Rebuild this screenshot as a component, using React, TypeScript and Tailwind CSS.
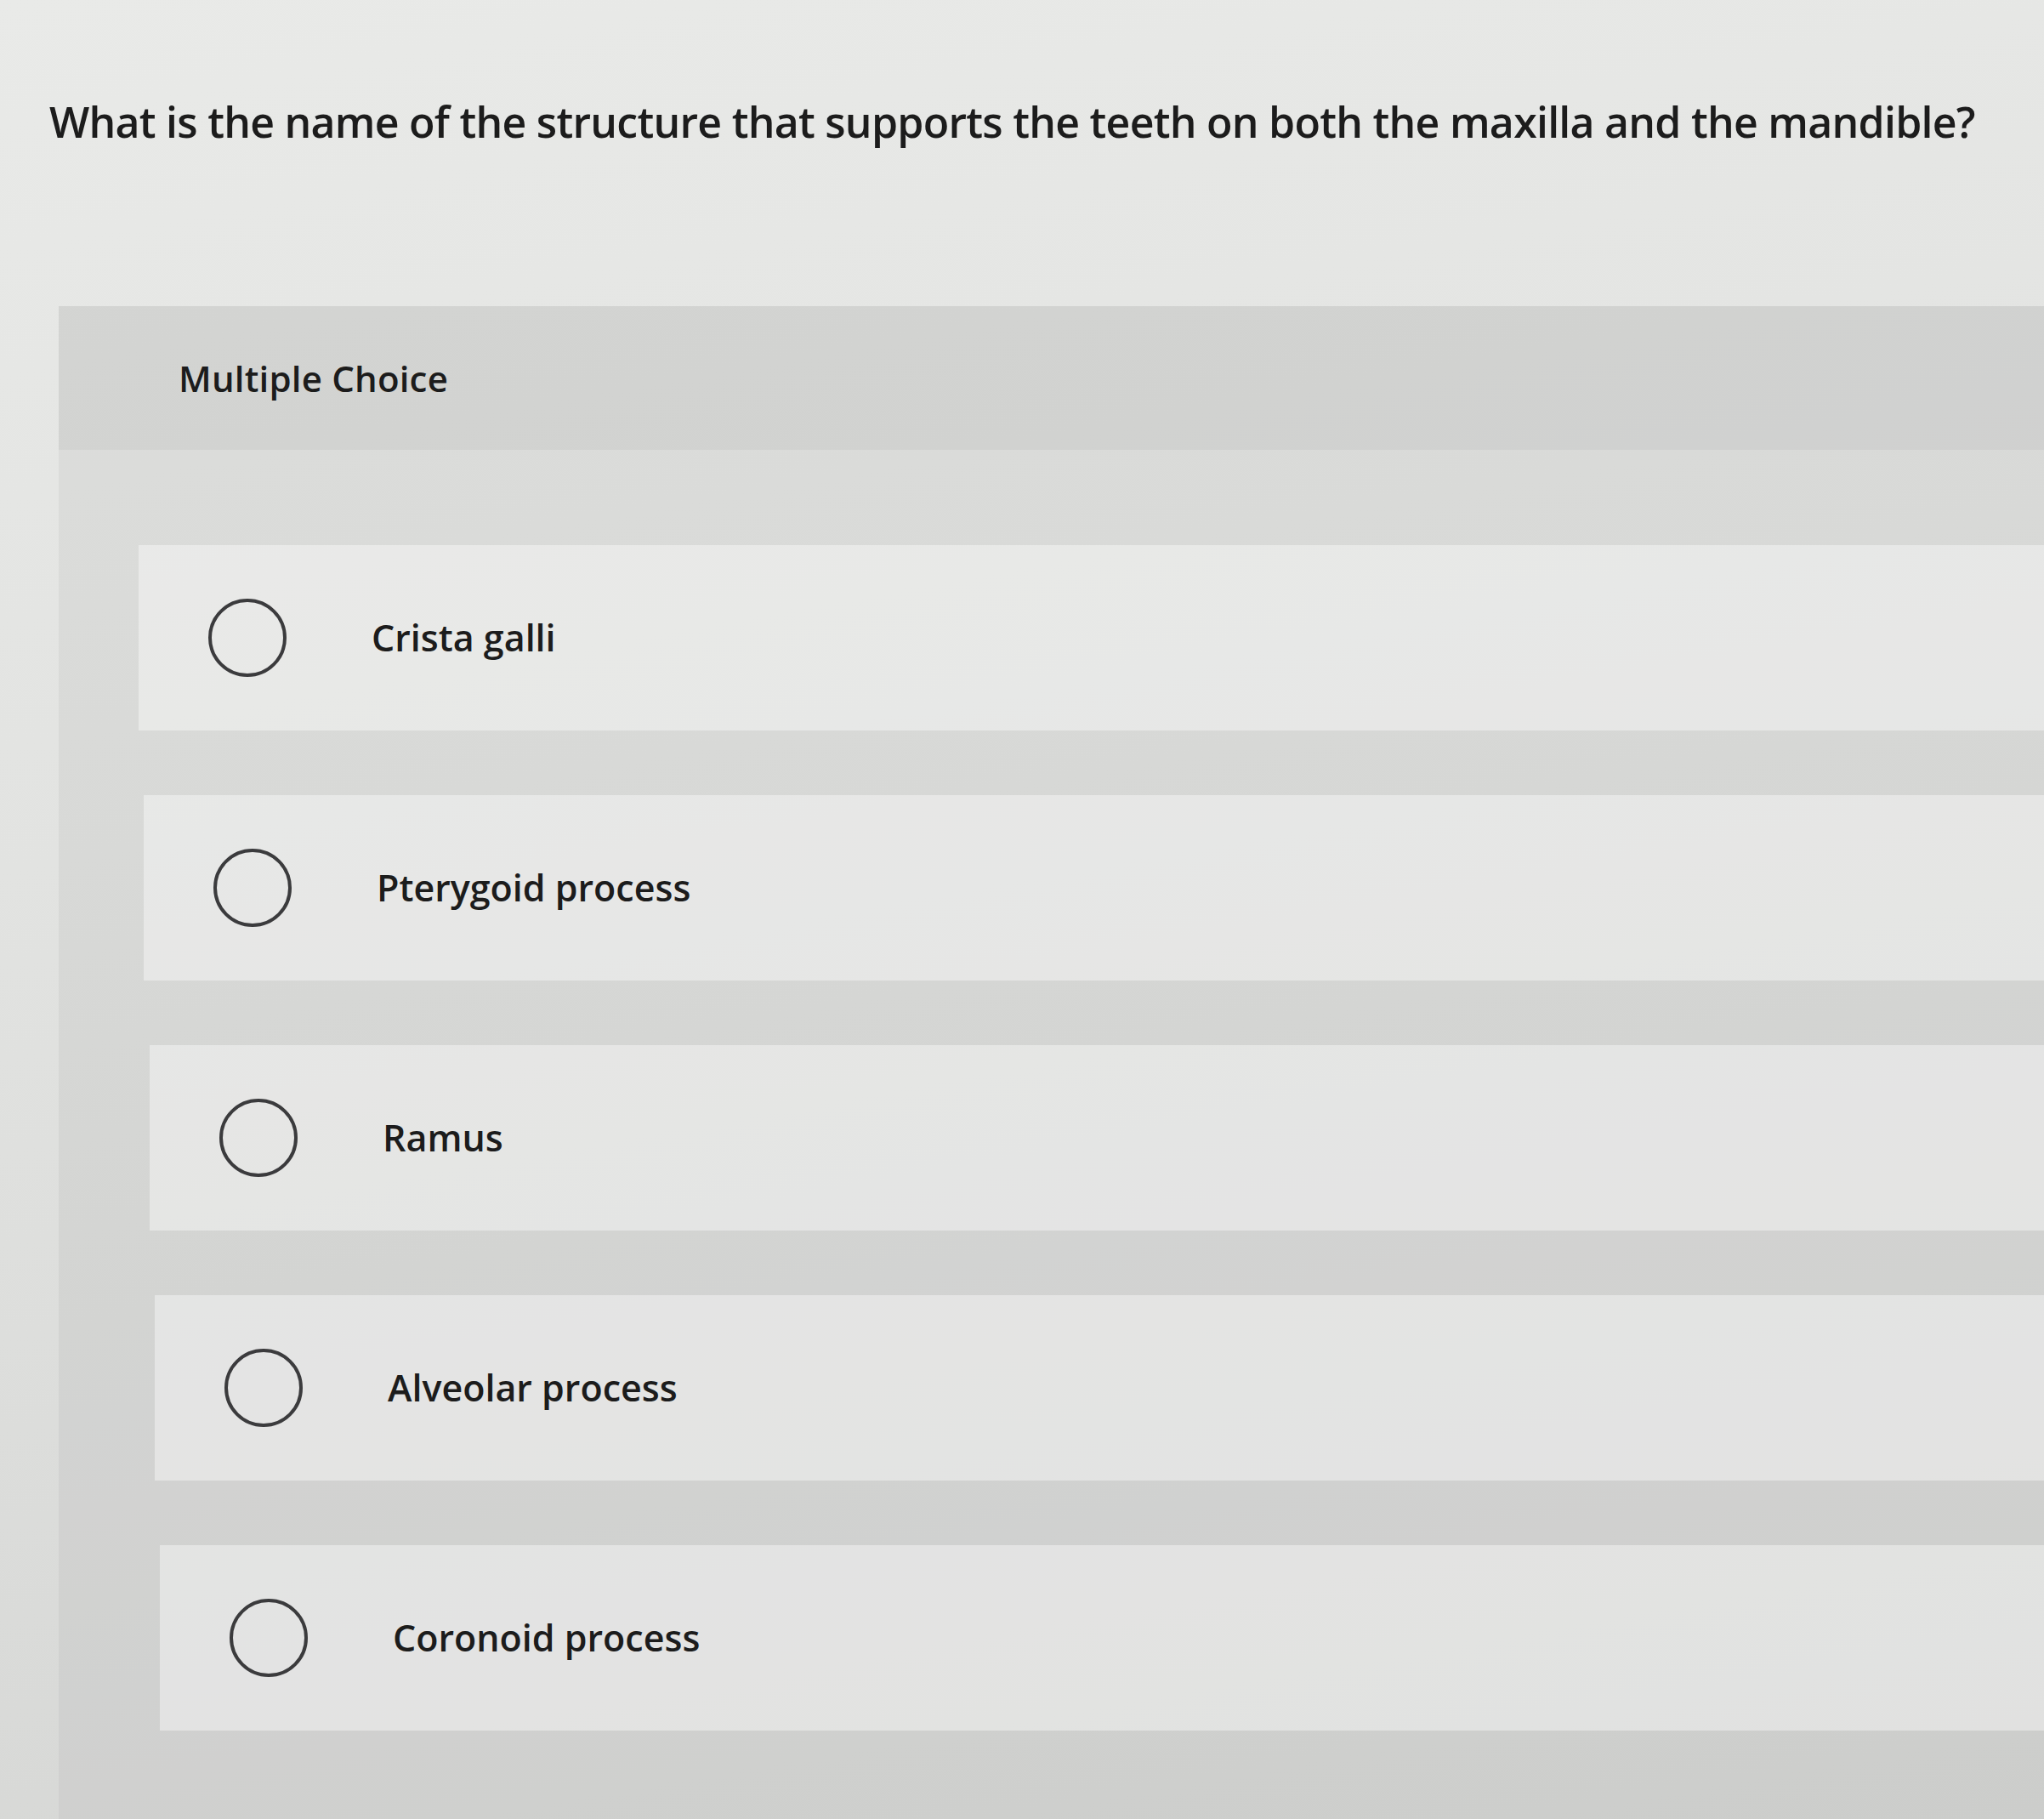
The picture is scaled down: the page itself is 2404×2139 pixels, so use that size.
import React from "react";

const options = [
  { label: "Crista galli", shift: "ml-[0px]" },
  { label: "Pterygoid process", shift: "ml-[6px]" },
  { label: "Ramus", shift: "ml-[13px]" },
  { label: "Alveolar process", shift: "ml-[19px]" },
  { label: "Coronoid process", shift: "ml-[25px]" },
];

export default function App() {
  return (
    <div
      className="w-[2404px] h-[2139px] overflow-hidden bg-[linear-gradient(170deg,#e9eae8_0%,#e2e3e1_40%,#d4d5d3_100%)] text-[#1c1c1c]"
      style={{ fontFamily: '"Open Sans", "Liberation Sans", sans-serif' }}
    >
      <div className="pt-[110px] pl-[58px]">
        <h1 className="text-[50px] leading-[66px] font-semibold tracking-[-0.74px]">
          What is the name of the structure that supports the teeth on both the maxilla and the mandible?
        </h1>
      </div>

      <div className="mt-[184px] ml-[69px] bg-[rgba(0,0,0,0.055)] h-[1800px]">
        <div className="h-[169px] flex items-center pl-[141px] bg-[rgba(0,0,0,0.025)]">
          <span className="text-[42px] font-semibold tracking-[0.2px]">Multiple Choice</span>
        </div>
        <div className="pt-[112px] pl-[94px] flex flex-col gap-[76px] bg-[rgba(255,255,255,0.08)]">
          {options.map((o) => (
            <div key={o.label} className={`h-[218px] flex items-center bg-[rgba(255,255,255,0.4)] ${o.shift}`}>
              <div className="ml-[82px] w-[92px] h-[92px] rounded-full border-[4px] border-[#3b3b3d] shrink-0" />
              <span className="ml-[100px] text-[43px] font-semibold tracking-[0px]">{o.label}</span>
            </div>
          ))}
          <div className="h-[100px]" />
        </div>
      </div>
    </div>
  );
}
